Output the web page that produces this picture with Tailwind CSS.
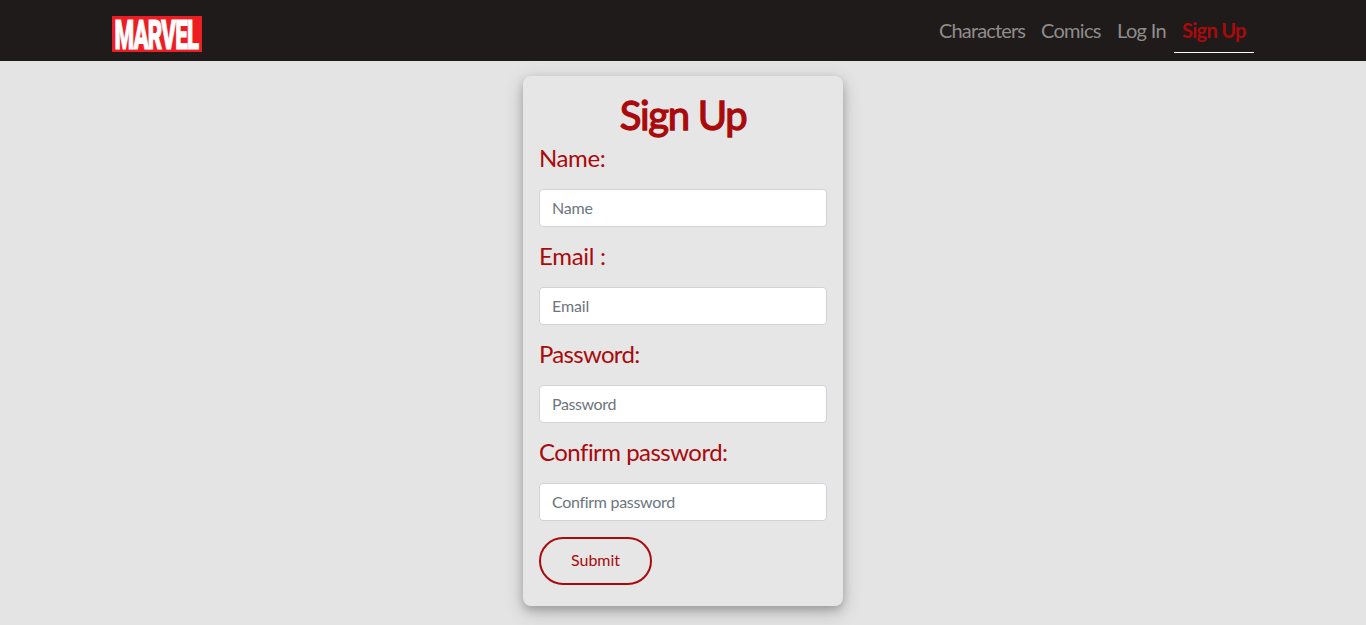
<!DOCTYPE html>
<html lang="en">
<head>
<meta charset="utf-8">
<title>Sign Up</title>
<script src="https://cdn.jsdelivr.net/npm/@tailwindcss/browser@4"></script>
</head>
<body class="bg-[#e4e4e4] h-[625px] overflow-hidden font-['Lato','Liberation_Sans',sans-serif] text-[#a90a0c]">
<nav class="bg-[#1f1b1a] h-[61px] px-28 flex items-start justify-between">
  <a href="#" class="mt-4" aria-label="Marvel">
    <svg width="90" height="36" viewBox="0 0 90 36" class="block overflow-visible">
      <rect width="90" height="36" fill="#ed1d24"/>
      <text transform="translate(2.4 32.5) scale(1.15 1.9)" letter-spacing="-0.8" textLength="73" lengthAdjust="spacingAndGlyphs" font-family="Roboto" font-weight="900" font-size="21.6" fill="#fff" stroke="#fff" stroke-width=".5">MARVEL</text>
    </svg>
  </a>
  <div class="flex mt-2 h-[45px] text-xl leading-[44px] text-[#8f8d8c]">
    <a href="#" class="w-[102px] pl-2 tracking-[-0.85px] whitespace-nowrap">Characters</a>
    <a href="#" class="w-[76px] pl-2 tracking-[-0.7px] whitespace-nowrap">Comics</a>
    <a href="#" class="w-[65px] pl-2 tracking-[-0.65px] whitespace-nowrap">Log In</a>
    <a href="#" class="w-20 pl-2 tracking-[-0.7px] whitespace-nowrap font-bold text-[#a90a0c] border-b border-white">Sign Up</a>
  </div>
</nav>
<main class="mx-auto mt-[15px] w-80 h-[530px] rounded-lg bg-[#e6e6e6] px-4 pt-[15px] shadow-[0_4px_8px_rgba(0,0,0,0.2),0_6px_20px_rgba(0,0,0,0.19)]">
  <h1 class="text-center text-[40px] leading-[48px] tracking-[-1.3px] [-webkit-text-stroke:1.3px]">Sign Up</h1>
  <form>
    <label class="block h-[50px] text-2xl leading-[38px] tracking-[-0.4px]"><span>Name:</span></label>
    <input placeholder="Name" class="block w-full h-[38px] mb-[10px] rounded border border-[#ced4da] bg-white px-3 pb-0.5 text-base tracking-[-0.2px] placeholder:text-[#6c757d]">
    <label class="block h-[50px] text-2xl leading-[38px] tracking-[-0.3px]"><span>Email :</span></label>
    <input placeholder="Email" class="block w-full h-[38px] mb-[10px] rounded border border-[#ced4da] bg-white px-3 pb-0.5 text-base tracking-[-0.1px] placeholder:text-[#6c757d]">
    <label class="block h-[50px] text-2xl leading-[38px] tracking-[-0.7px]"><span>Password:</span></label>
    <input placeholder="Password" class="block w-full h-[38px] mb-[10px] rounded border border-[#ced4da] bg-white px-3 pb-0.5 text-base tracking-[-0.4px] placeholder:text-[#6c757d]">
    <label class="block h-[50px] text-2xl leading-[38px] tracking-[-0.53px]"><span>Confirm password:</span></label>
    <input placeholder="Confirm password" class="block w-full h-[38px] mb-4 rounded border border-[#ced4da] bg-white px-3 pb-0.5 text-base tracking-[-0.3px] placeholder:text-[#6c757d]">
    <button type="button" class="w-[113px] h-12 rounded-full border-2 border-[#a90a0c] pb-0.5 text-base leading-[42px] tracking-[-0.05px]">Submit</button>
  </form>
</main>
</body>
</html>
